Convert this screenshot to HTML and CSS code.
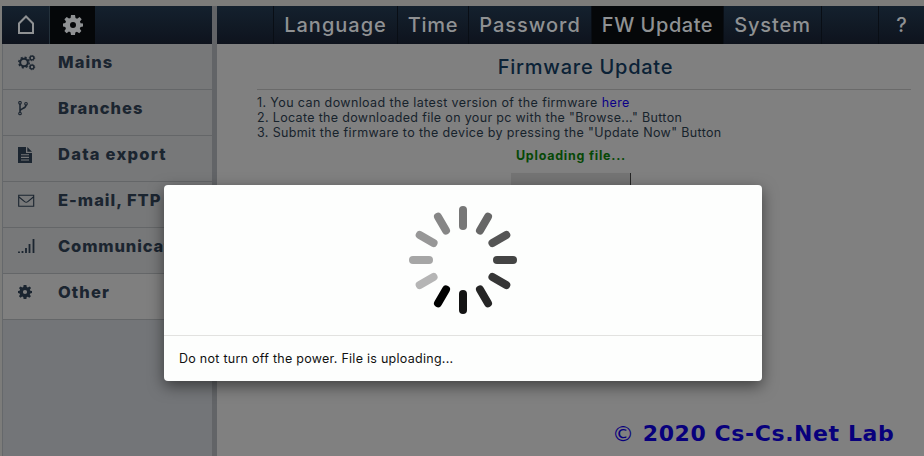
FILE: index.html
```html
<!DOCTYPE html>
<html lang="en">
<head>
<meta charset="utf-8">
<title>Firmware Update</title>
<link rel="stylesheet" href="styles.css">
</head>
<body>
<div class="app">
  <aside class="sidebar">
    <div class="side-tabs">
      <a class="side-tab home"><svg width="18" height="20" viewBox="0 0 18 20"><path d="M2 18V8.5L9 1.5l7 7V18z" fill="none" stroke="currentColor" stroke-width="2"/></svg></a>
      <a class="side-tab gear active"><svg width="20" height="20" viewBox="0 0 20 20"><use href="#cog"/></svg></a>
    </div>
    <ul class="menu">
      <li><svg class="icon" viewBox="0 0 18 16"><g fill="none" stroke="currentColor"><circle cx="6" cy="7.5" r="3.8" stroke-width="2"/><circle cx="6" cy="7.5" r="5.2" stroke-width="1.5" stroke-dasharray="2.1 1.98"/><circle cx="14" cy="3" r="1.9" stroke-width="1.4"/><circle cx="14" cy="3" r="2.7" stroke-dasharray="1.2 .92"/><circle cx="14" cy="12" r="1.9" stroke-width="1.4"/><circle cx="14" cy="12" r="2.7" stroke-dasharray="1.2 .92"/></g></svg><span class="mains">Mains</span></li>
      <li><svg class="icon" viewBox="0 0 18 16"><g fill="none" stroke="currentColor" stroke-width="1.1"><circle cx="2" cy="1.8" r="1.3"/><circle cx="2" cy="12.5" r="1.3"/><circle cx="8" cy="2.8" r="1.3"/><path d="M2 3v8M8 4c0 4-5.5 3-6 6" stroke-width="1.5"/></g></svg><span class="branches">Branches</span></li>
      <li><svg class="icon" viewBox="0 0 18 16"><path d="M0 0h8v6h6v10H0z" fill="currentColor"/><path d="M9.3 0 14 4.7H9.3z" fill="currentColor"/><path d="M3 7.8h8M3 10.4h8M3 13h8" stroke="#777879" stroke-width="1.1"/></svg><span class="export">Data export</span></li>
      <li><svg class="icon" viewBox="0 0 18 16"><path d="M.7 2.2h15v11H.7zM1 4l5.6 4.6q1.6 1.3 3.2 0L15.4 4" fill="none" stroke="currentColor" stroke-width="1.1"/></svg><span class="email">E-mail, FTP</span></li>
      <li><svg class="icon" viewBox="0 0 18 16"><path d="M1 12.5V14M4.5 12V14M8 9V14M11.5 5V14M15.5 0V14" stroke="currentColor" stroke-width="1.8"/></svg><span class="comm">Communication</span></li>
      <li class="selected"><svg class="icon" viewBox="0 0 18 16"><svg width="14" height="14" viewBox="0 0 20 20"><use href="#cog"/></svg></svg><span class="other">Other</span></li>
    </ul>
  </aside>
  <main class="content">
    <nav class="nav">
      <a class="language"><span>Language</span></a>
      <a class="time"><span>Time</span></a>
      <a class="password"><span>Password</span></a>
      <a class="fw active"><span>FW Update</span></a>
      <a class="system"><span>System</span></a>
      <a class="help"><span>?</span></a>
    </nav>
    <section class="page">
      <h1><span>Firmware Update</span></h1>
      <div class="steps">
        <div><span class="step1">1. You can download the latest version of the firmware <a>here</a></span></div>
        <div><span class="step2">2. Locate the downloaded file on your pc with the "Browse..." Button</span></div>
        <div><span class="step3">3. Submit the firmware to the device by pressing the "Update Now" Button</span></div>
      </div>
      <div class="status"><span>Uploading file...</span></div>
      <div class="progress"></div>
    </section>
  </main>
</div>
<div class="modal">
  <div class="modal-body">
    <svg class="spinner" viewBox="-54 -54 108 108">
      <defs><rect id="bar" x="-4" y="-54" width="8" height="24" rx="4"/></defs>
      <use href="#bar" fill="#777"/>
      <use href="#bar" fill="#676767" transform="rotate(30)"/>
      <use href="#bar" fill="#555" transform="rotate(60)"/>
      <use href="#bar" fill="#444" transform="rotate(90)"/>
      <use href="#bar" fill="#363636" transform="rotate(120)"/>
      <use href="#bar" fill="#252525" transform="rotate(150)"/>
      <use href="#bar" fill="#131313" transform="rotate(180)"/>
      <use href="#bar" fill="#000" transform="rotate(210)"/>
      <use href="#bar" fill="#b5b5b5" transform="rotate(240)"/>
      <use href="#bar" fill="#a6a6a6" transform="rotate(270)"/>
      <use href="#bar" fill="#979797" transform="rotate(300)"/>
      <use href="#bar" fill="#868686" transform="rotate(330)"/>
    </svg>
  </div>
  <div class="modal-footer"><span>Do not turn off the power. File is uploading...</span></div>
</div>
<div class="watermark"><span class="mark">©</span> 2020 Cs-Cs.Net Lab</div>
<svg width="0" height="0" class="defs"><defs><path id="cog" fill="currentColor" fill-rule="evenodd" d="M8 0h4l.5 3 1.6.7L16.6 2l2.1 2.3-1.8 2.3.7 1.6 2.4.4v3l-2.5.5-.7 1.6 1.6 2.3-2.2 2.2-2.3-1.5-1.6.7L12 20H8l-.5-2.7-1.6-.7-2.3 1.6L1.4 16l1.5-2.3-.6-1.6L0 11.6v-3l2.3-.5.7-1.6-1.6-2.3L3.7 2 6 3.5l1.6-.6zM10 7a3 3 0 1 0 0 6 3 3 0 0 0 0-6z"/></defs></svg>
</body>
</html>
```
FILE: styles.css
```css
* { box-sizing: border-box; }
body {
  margin: 0;
  height: 456px;
  overflow: hidden;
  background: #7c7c7a;
  color: #17232c;
  font: 12.5px/15px Inter, "Liberation Sans", sans-serif;
}
.app { display: flex; height: 456px; padding: 6px 0 0 2px; }
.sidebar { width: 210px; background: #737578; border-left: 1px solid #65686b; }
.side-tabs, .nav {
  display: flex;
  height: 38px;
  background: linear-gradient(#14212e, #0e131d);
  color: #8f9193;
}
.side-tabs { margin-left: -1px; }
.side-tab { display: flex; align-items: center; justify-content: center; }
.home { width: 48px; border-right: 1px solid #24313b; }
.gear { width: 45px; }
.active { background: #050709; }
.menu { list-style: none; margin: 0; padding: 0; }
.menu li {
  display: flex;
  height: 46px;
  padding: 8px 0 0 15px;
  background: #777879;
  border-bottom: 1px solid #646668;
  color: #1b2530;
  font-size: 16.5px;
  line-height: 20px;
  font-weight: 800;
  letter-spacing: 1.1px;
  white-space: nowrap;
  overflow: hidden;
}
.menu .selected { background: #7f7f7f; }
.menu .branches { letter-spacing: 1px; }
.menu .export { letter-spacing: 1.25px; }
.menu .email { letter-spacing: 1px; }
.menu .comm { letter-spacing: .85px; }
.icon { width: 18px; height: 16px; margin: 3px 22px 0 0; flex: none; }
.content { flex: 1; border-left: 5px solid #626467; background: #808080; }
.nav { padding-left: 56px; }
.nav a {
  display: flex;
  align-items: center;
  justify-content: center;
  border-left: 1px solid #090e15;
  padding-bottom: 1px;
  font-size: 20px;
  line-height: 24px;
  font-weight: 500;
}
.nav .language { width: 124px; letter-spacing: 1px; }
.nav .time { width: 71px; letter-spacing: .7px; }
.nav .password { width: 123px; letter-spacing: 1px; }
.nav .fw { width: 132px; letter-spacing: .55px; }
.nav .system { width: 99px; border-right: 1px solid #090e15; letter-spacing: .9px; }
.nav .help { width: 46px; margin-left: auto; }
.page { padding: 0 13px 0 40px; }
h1 {
  margin: 0 0 5px;
  height: 46px;
  padding: 11px 0 0 3px;
  border-bottom: 1px solid #6a6a6a;
  text-align: center;
  color: #0b2236;
  font-size: 20px;
  line-height: 24px;
  font-weight: 500;
  letter-spacing: .75px;
}
.steps { white-space: nowrap; letter-spacing: .36px; }
.steps .step1 { letter-spacing: .39px; }
.steps .step2 { letter-spacing: .33px; }
.steps a { color: #0b0087; }
.status { margin-top: 8px; text-align: center; padding-right: 26px; color: #064806; font-weight: 700; letter-spacing: .76px; }
.progress { width: 120px; height: 24px; margin: 10px 0 0 254px; background: #747474; border-right: 1px solid #252525; }
.modal {
  position: absolute;
  left: 164px;
  top: 185px;
  width: 598px;
  height: 196px;
  border-radius: 4px;
  background: #fdfefd;
  box-shadow: 0 5px 15px rgba(0, 0, 0, .5);
  color: #111;
}
.modal-body { height: 151px; padding-top: 21px; border-bottom: 1px solid #e2e2e0; text-align: center; }
.spinner { width: 108px; height: 108px; }
.modal-footer { padding: 15px; letter-spacing: .27px; }
.watermark {
  position: absolute;
  left: 612px;
  top: 420px;
  color: #08007c;
  font: 700 22px/28px "DejaVu Sans", sans-serif;
  letter-spacing: .58px;
  white-space: nowrap;
}
.mark { font-weight: 400; }
.defs { position: absolute; }
```
